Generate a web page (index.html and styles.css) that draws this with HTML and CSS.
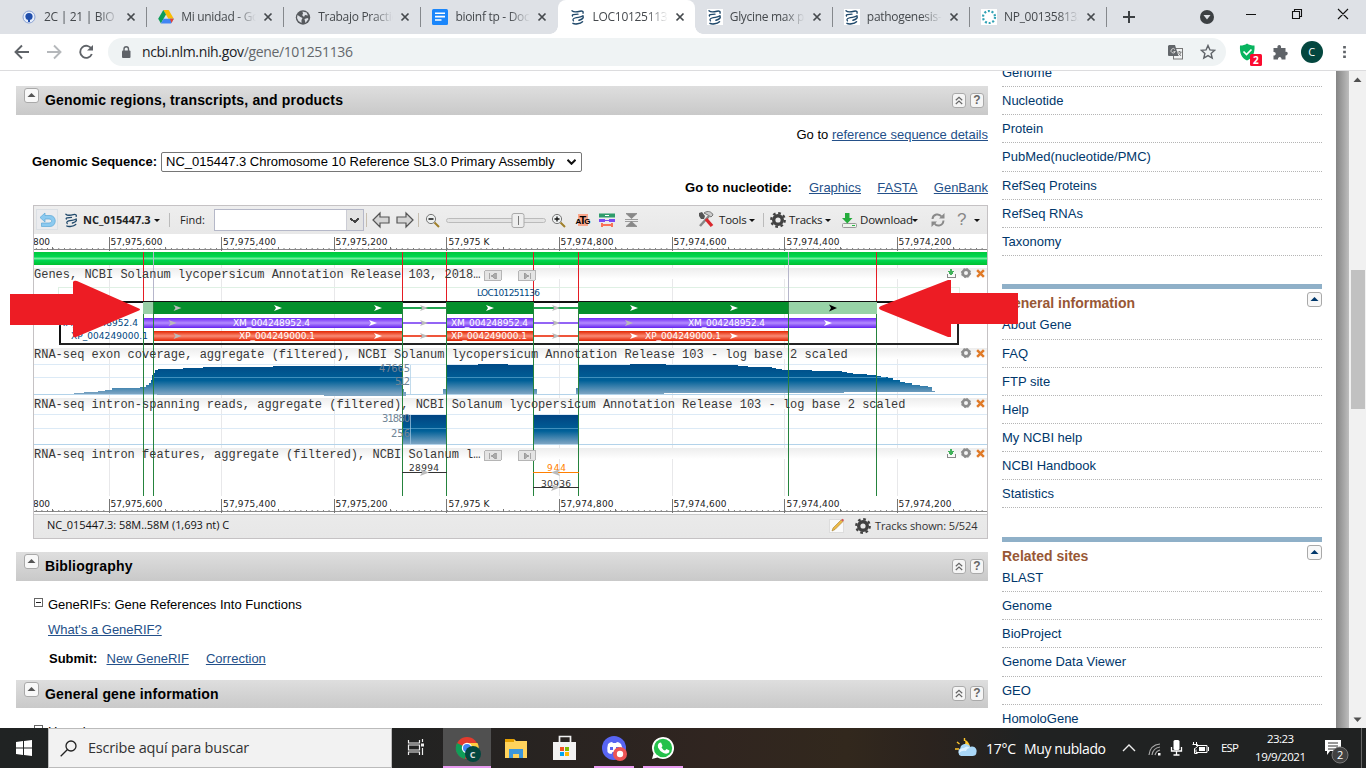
FILE: index.html
```html
<!DOCTYPE html>
<html lang="es">
<head>
<meta charset="utf-8">
<title>LOC101251136 - Gene - NCBI</title>
<link rel="stylesheet" href="styles.css">
</head>
<body>
<svg class="defs" width="0" height="0">
  <symbol id="dna" viewBox="0 0 16 16"><g fill="none" stroke="#20496b" stroke-linecap="round"><path d="M2 1.800C4 3.800 7 3 10 2.200c2.500-.5 3.600.3 3 2" stroke-width="1.400"/><path d="M2.500 7C1.500 5.800 4 5.200 8 5.200M13 6.800C11 8.700 8 8 5 9c-2.500.8-2.300 2-1.500 2.900" stroke-width="1.300"/><path d="M9 11.200c3-.9 4.800-2 4-3.700M3 14.400c2 1.100 7 .5 9.500-1.700" stroke-width="1.500"/></g></symbol>
  <symbol id="x" viewBox="0 0 10 10"><path d="M1.500 1.500l7 7m0-7l-7 7" stroke="#45494d" stroke-width="1.700"/></symbol>
  <symbol id="gear" viewBox="0 0 16 16"><circle cx="8" cy="8" r="4.300" fill="none" stroke="currentColor" stroke-width="3.400"/><circle cx="8" cy="8" r="6.800" fill="none" stroke="currentColor" stroke-width="2.200" stroke-dasharray="2.670 2.670"/></symbol>
  <symbol id="up" viewBox="0 0 15 15"><rect x=".5" y=".5" width="14" height="14" rx="2.500" fill="#f8f8f8" stroke="#a9a9a9"/><path d="M3.500 9h8l-4-4z" fill="currentColor"/></symbol>
  <symbol id="dbl" viewBox="0 0 14 15"><rect x=".5" y=".5" width="13" height="14" rx="2.500" fill="#f5f5f5" stroke="#aaa"/><path d="M3.800 7.200L7 4.300l3.200 2.900M3.800 11L7 8.100l3.200 2.900" fill="none" stroke="#666" stroke-width="1.200"/></symbol>
  <symbol id="trackx" viewBox="0 0 8 8"><path d="M1 1l6 6m0-6L1 7" stroke="#e07a28" stroke-width="2.200"/></symbol>
</svg>

<header class="tabs">
  <div class="tab"><svg width="14" height="14" viewBox="0 0 14 14"><circle cx="7" cy="7" r="6" fill="#e7eefb" stroke="#8ba3d4"/><circle cx="7" cy="6.500" r="3.600" fill="#204eab"/><path d="M6 9h2v3H6z" fill="#204eab"/></svg><span>2C | 21 | BIO |B</span><svg class="cl"><use href="#x"/></svg></div>
  <div class="tab"><svg width="16" height="14" viewBox="0 0 16 14"><path d="M5.300 0h5.400l5.100 8.800h-5.400z" fill="#fbbc04"/><path d="M5.300 0L8 4.600 2.900 13.500.2 8.800z" fill="#0f9d58"/><path d="M5.600 8.800h10.200l-2.700 4.700H2.900z" fill="#4285f4"/><path d="M11.900 8.800h3.900l-2.300 4.200z" fill="#ea4335"/></svg><span>Mi unidad - Google</span><svg class="cl"><use href="#x"/></svg></div>
  <div class="tab"><svg width="15" height="15" viewBox="0 0 15 15"><circle cx="7.500" cy="7.500" r="7.200" fill="#56595d"/><path d="M2 5l3 2 2 1-1 2 0 3-3-2-1.500-3zM7 1.500l4 1 1.500 3-3-.5-1 2-2-2 1-1zM9 9l3-1 1 1-3 4z" fill="#dee1e6"/></svg><span>Trabajo Practico</span><svg class="cl"><use href="#x"/></svg></div>
  <div class="tab nosep"><svg width="16" height="16" viewBox="0 0 16 16"><rect width="16" height="16" rx="1.500" fill="#1a86fb"/><path d="M3 4.200h10M3 7.600h10M3 11h6.500" stroke="#fff" stroke-width="1.600"/></svg><span>bioinf tp - Docum</span><svg class="cl"><use href="#x"/></svg></div>
  <div class="tab active"><svg width="16" height="16"><use href="#dna"/></svg><span>LOC10125113</span><svg class="cl"><use href="#x"/></svg></div>
  <div class="tab nosep"><svg class="wb" width="16" height="16"><use href="#dna"/></svg><span>Glycine max pat</span><svg class="cl"><use href="#x"/></svg></div>
  <div class="tab lsep"><svg class="wb" width="16" height="16"><use href="#dna"/></svg><span>pathogenesis-r</span><svg class="cl"><use href="#x"/></svg></div>
  <div class="tab"><svg class="wb" width="16" height="16" viewBox="0 0 16 16"><circle cx="8" cy="8" r="6" fill="none" stroke="#31a2b5" stroke-width="2.200" stroke-dasharray="2 1.770"/></svg><span>NP_0013581334</span><svg class="cl"><use href="#x"/></svg></div>
  <svg class="winctl" width="260" height="34" viewBox="1106 0 260 34"><path d="M1123 17h12M1129 11v12" stroke="#3c4043" stroke-width="2"/><circle cx="1207" cy="17" r="7" fill="#3c4043"/><path d="M1203.500 15h7l-3.500 4.500z" fill="#dee1e6"/><path d="M1246 14.500h10M1292.500 11.500h7v7h-7zM1294.500 11v-1.500h7v7h-2M1338 9l10 10m0-10l-10 10" fill="none" stroke="#111" stroke-width="1.100"/></svg>
</header>

<div class="nav">
  <svg width="108" height="36" viewBox="0 34 108 36" fill="none" stroke="#5f6368" stroke-width="1.900"><path d="M29 52H16m6-6.500L15.500 52l6.500 6.500"/><path d="M47 52h13m-6-6.500l6.500 6.500-6.500 6.500" stroke="#b5b8bb"/><path d="M91.500 49a6 6 0 1 0 .3 5"/><path d="M87 50.500h6V45z" fill="#5f6368" stroke="none"/></svg>
  <div class="omni"><svg width="10" height="12" viewBox="0 0 10 12"><rect x="1" y="4.500" width="8.500" height="7.500" rx="1" fill="#5f6368"/><path d="M3 5V3a2.250 2.250 0 0 1 4.500 0v2" fill="none" stroke="#5f6368" stroke-width="1.400"/></svg><span class="url">ncbi.nlm.nih.gov<i>/gene/101251136</i></span>
    <svg width="15" height="15" viewBox="0 0 15 15"><rect x="5.500" y="3.500" width="9" height="10.500" fill="#f1f3f4" stroke="#777"/><path d="M1 0h6l3.500 11H1a1 1 0 0 1-1-1V1z" fill="#62666a"/><path d="M7 4.500a2.200 2.200 0 1 0 .3 2H5.500" fill="none" stroke="#ddd" stroke-width=".9"/><path d="M9.500 7h4M11.500 6v1m1.500 0c-.5 2-1.500 3-2.500 3.500m0-2.500l2.500 3" fill="none" stroke="#666" stroke-width=".8"/></svg>
    <svg class="star" width="16" height="16" viewBox="0 0 16 16"><path d="M8 1.500l1.900 4.400 4.800.4-3.600 3.100 1.100 4.700L8 11.600l-4.200 2.500 1.100-4.700L1.300 6.300l4.800-.4z" fill="none" stroke="#5f6368" stroke-width="1.400"/></svg></div>
  <svg width="140" height="36" viewBox="1226 34 140 36"><path d="M1240 45.500c3 0 5-.5 7-2 2 1.500 4.500 2 7.500 2 .5 8-2 12.500-7.500 15-5.500-2.500-7.500-7-7-15z" fill="#08b45f"/><path d="M1243.500 51.500l3 3 5-5" stroke="#fff" stroke-width="1.700" fill="none"/><rect x="1250" y="54" width="12" height="12" rx="1.500" fill="#fb0b2f"/><text class="badge" x="1253" y="64">2</text><path d="M1273.500 48h4c-1-4 4.500-4 3.500 0h4.500v4c3-1 3 4 0 3.500v4h-4c.5-3.500-4-3.500-3.500 0h-4.500v-4c3 .5 3-4 0-3.500z" fill="#5f6368"/><circle cx="1312" cy="52" r="11" fill="#04473f"/><text class="ava" x="1308.200" y="56">C</text><path d="M1344.500 46v2.500m0 2.250v2.500m0 2.250v2.500" stroke="#5f6368" stroke-width="2.700"/></svg>
</div>

<div class="page">
<main>
  <h2 class="bar"><svg class="u" width="15" height="15"><use href="#up"/></svg><span>Genomic regions, transcripts, and products</span><svg width="14" height="15"><use href="#dbl"/></svg><b class="q">?</b></h2>
  <div class="r ra"><span>Go to <a>reference sequence details</a></span></div>
  <div class="r rb"><b>Genomic Sequence:</b><div class="sel"><span>NC_015447.3 Chromosome 10 Reference SL3.0 Primary Assembly</span><svg width="9" height="6" viewBox="0 0 9 6"><path d="M.5 .8l4 4 4-4" fill="none" stroke="#111" stroke-width="2"/></svg></div></div>
  <div class="r rc"><b>Go to nucleotide:</b><a>Graphics</a><a>FASTA</a><a>GenBank</a></div>

  <section class="viewer">
    <div class="vt">
      <svg width="48" height="28" viewBox="34 206 48 28"><rect x="36.500" y="209.500" width="21" height="20" fill="#ebecef" stroke="#dbe0e5"/><path d="M45 213l-5 4.500 5 4.500v-3h4c3.500 0 3.500 4 0 4h-7.500v3.500h8.500c7 0 7-11 0-11h-5z" fill="#8ccaf0" stroke="#5ba8d6" stroke-width=".7"/><svg x="64" y="212" width="15" height="16"><use href="#dna"/></svg></svg>
      <b class="acc">NC_015447.3</b><i class="car"></i><i class="vs"></i><span class="find">Find:</span>
      <div class="inp"><svg width="17" height="20" viewBox="0 0 17 20"><rect width="17" height="20" fill="#e3e3e3"/><path d="M0 0v20" stroke="#b5b8c8"/><path d="M4 8h2v1h1v1h3V9h1V8h2v2h-1v1h-1v1h-1v1H8v-1H7v-1H5v-1H4z" fill="#444"/></svg></div>
      <svg width="334" height="28" viewBox="364 206 334 28"><path d="M366.500 213v14M418.500 213v14" stroke="#c6beb0"/><path d="M373 220l7-7v4h9v6h-9v4zM413 220l-7-7v4h-9v6h9v4z" fill="#d4d4d4" stroke="#555" stroke-width="1.200"/><g fill="#edf0f0" stroke="#777"><circle cx="431" cy="219" r="4.600"/><circle cx="557" cy="219" r="4.600"/></g><path d="M434.500 222.500l4.500 4.500M560.500 222.500l4.500 4.500" stroke="#a0802c" stroke-width="2"/><path d="M428.500 219h5M554.500 219h5m-2.500-2.500v5" stroke="#111" stroke-width="1.300"/><rect x="446.500" y="218.500" width="99" height="4" rx="2" fill="#e4e4e4" stroke="#bbb"/><rect x="512" y="213.500" width="12" height="14" rx="2" fill="#eee" stroke="#aaa"/><path d="M518.500 216v9" stroke="#777"/><rect x="578" y="214" width="10" height="12" fill="#f9a58b"/><text class="atg" x="575.500" y="224" textLength="15">A<tspan font-size="11">T</tspan>G</text><path d="M599 215.500h16" stroke="#2f9c6b" stroke-width="4"/><path d="M605 215.500h4" stroke="#fff" stroke-width="1"/><path d="M599 220.500h6m4 0h6" stroke="#7a4af2" stroke-width="3"/><path d="M605 220.500h4" stroke="#7a4af2"/><path d="M601 225h11M602 223v4m10-4v4" stroke="#fa7157" stroke-width="2"/><path d="M625 219.500h13M625 221.500h13M626 213.500h11l-5.500 5zM626 226.500h11l-5.500-5z" fill="#888" stroke="#888" stroke-width=".8"/></svg>
      <svg width="18" height="20" viewBox="698 210 18 20"><path d="M700 226l9-10" stroke="#888" stroke-width="2.500"/><path d="M704 213c4-3 8-1 9 2l-2 2-3-2z" fill="#ccc" stroke="#777"/><path d="M699 213l3-1 3 4-1 3-3 0-2-3z" fill="#555"/><path d="M706 219l6 7" stroke="#d9272c" stroke-width="3.400"/></svg>
      <span class="t1">Tools</span><i class="car"></i><i class="vs v2"></i>
      <svg class="gr" width="16" height="16"><use href="#gear"/></svg><span class="t2">Tracks</span><i class="car"></i>
      <svg class="dl" width="18" height="17" viewBox="0 0 18 17"><rect x="1.500" y="11.500" width="14" height="4" rx="1" fill="#eef3ec" stroke="#999"/><path d="M4 1h4.500v5h3L6.300 11.500 1 6h3z" fill="#25ac3c"/><path d="M11 13.500h3" stroke="#2eb649"/></svg><span class="t3">Download</span><i class="car"></i>
      <svg class="rf" width="16" height="16" viewBox="0 0 16 16"><path d="M2.500 7C3 2 9 1 11.500 4.500M13.500 8.500C13 14 7 15 4.500 11.500" fill="none" stroke="#8a8a8a" stroke-width="2"/><path d="M9 6.500h5.500V1zM7 9.500H1.500V15z" fill="#8a8a8a"/></svg>
      <span class="qm">?</span><i class="car"></i>
    </div>
    <svg class="chart" width="953" height="280" viewBox="34 234 953 280" shape-rendering="crispEdges">
      <defs>
        <linearGradient id="gg" x2="0" y2="1"><stop offset="0" stop-color="#00c83c"/><stop offset=".35" stop-color="#00d650"/><stop offset=".5" stop-color="#6df09b"/><stop offset=".65" stop-color="#00d650"/><stop offset="1" stop-color="#00c02f"/></linearGradient>
        <linearGradient id="pu" x2="0" y2="1"><stop offset="0" stop-color="#6d28f5"/><stop offset=".5" stop-color="#b48bff"/><stop offset="1" stop-color="#6422ef"/></linearGradient>
        <linearGradient id="rd" x2="0" y2="1"><stop offset="0" stop-color="#e22500"/><stop offset=".5" stop-color="#fa8a74"/><stop offset="1" stop-color="#e02200"/></linearGradient>
        <linearGradient id="hd" x2="0" y2="1"><stop offset="0" stop-color="#ededed"/><stop offset="1" stop-color="#fff"/></linearGradient>
        <linearGradient id="bl" gradientUnits="userSpaceOnUse" x1="0" x2="0" y1="364" y2="394"><stop offset="0" stop-color="#004a86"/><stop offset=".55" stop-color="#006098"/><stop offset="1" stop-color="#7ea5c3"/></linearGradient>
        <linearGradient id="b2" x2="0" y2="1"><stop offset="0" stop-color="#004482"/><stop offset=".55" stop-color="#006098"/><stop offset="1" stop-color="#7ea5c3"/></linearGradient>
        <pattern id="tk" x="109" width="5.630" height="2" patternUnits="userSpaceOnUse" y="0"><rect width="1.200" height="2" fill="#777"/></pattern>
        <g id="rule"><path d="M34 249.500h953" stroke="#888"/><rect x="34" y="247.500" width="953" height="1.500" fill="url(#tk)"/><path d="M109.500 237v14M221.500 237v14M334.500 237v14M446.500 237v14M559.500 237v14M672.500 237v14M784.500 237v14M897.500 237v14M52.500 247v3M165.500 247v3M278.500 247v3M390.500 247v3M503.500 247v3M615.500 247v3M728.500 247v3M840.500 247v3M953.500 247v3" stroke="#777"/>
        <g class="rl"><text x="33" y="245" textLength="17">800</text><text x="110.500" y="245" textLength="52">57,975,600</text><text x="223" y="245" textLength="53">57,975,400</text><text x="335.500" y="245" textLength="52">57,975,200</text><text x="448.500" y="245" textLength="41">57,975 K</text><text x="560.500" y="245" textLength="53">57,974,800</text><text x="673.500" y="245" textLength="53">57,974,600</text><text x="786.500" y="245" textLength="53">57,974,400</text><text x="898.500" y="245" textLength="53">57,974,200</text></g></g>
        <g id="pv"><rect x=".5" y=".5" width="17" height="10" rx="1.500" fill="#e4e4e4" stroke="#b5b5b5"/><path d="M5.500 3v6M12 3v6L7 6z" fill="#aaa" stroke="#999" stroke-width=".8"/></g>
        <g id="gearx" shape-rendering="auto"><circle cx="966" cy="5" r="3.300" fill="none" stroke="#8c8c8c" stroke-width="2.600"/><circle cx="966" cy="5" r="4.600" fill="none" stroke="#8c8c8c" stroke-dasharray="1.800 1.800"/><svg x="976" y="1" width="9" height="9"><use href="#trackx"/></svg></g>
        <g id="dn"><path d="M951 0v5m-2.500-3l2.500 3 2.500-3" stroke="#41b15a" stroke-width="1.800" fill="none"/><path d="M947 5v3h8V5" fill="none" stroke="#888"/></g>
      </defs>
      <rect x="34" y="234" width="953" height="280" fill="#fff"/>
      <use href="#rule"/><use href="#rule" y="262"/>
      <path d="M109.500 265v231M221.500 265v231M334.500 265v231M446.500 265v231M559.500 265v231M672.500 265v231M784.500 265v231M897.500 265v231" stroke="#e8e8ea"/>
      <rect x="34" y="252" width="953" height="13" fill="url(#gg)"/>
      <g fill="url(#hd)"><rect x="34" y="268" width="953" height="11"/><rect x="34" y="348" width="953" height="11"/><rect x="34" y="398" width="953" height="11"/><rect x="34" y="448" width="953" height="11"/></g>
      <path d="M58.500 301V287.500h901V301" fill="none" stroke="#dff0e4"/>
      <path d="M34 364.500h953M34 377.500h953M34 414.500h953M34 428.500h953" stroke="#dceaf6"/><path d="M34 394.500h953M34 444.500h953" stroke="#b3d3ea"/>
      <path d="M74 394v-1h10v-1h14v-1h7v-1h7v-2h28v-1h6v-2h3v-2h2v-3h1v-5h1v-2h2v-3l6-1h22v-1h20v-1h70v-1h129v23h2v3h2v4zM443 394v-5h3v-24h32v-1h30v1h25v24h4v5zM576 394v-6h2v-23h52v-1h36v1h72v1h10v1h24v1h4v1h6v1h30v1h30v1h5v1h6v1h14v1h9v1h5v1h7v1h5v2h7v2h5v1h7v2h8v1h8v1h4v4h3v1z" fill="url(#bl)"/>
      <path d="M153 377.500h249M446 377.500h87M578 377.500h308" stroke="#4190bd"/>
      <rect x="402" y="415" width="45" height="29" fill="url(#b2)"/><rect x="533" y="415" width="46" height="29" fill="url(#b2)"/><path d="M402 428.500h45M533 428.500h46" stroke="#4190bd"/>
      <path d="M410.500 365v29M410.500 415v29" stroke="#a9cce5" opacity=".7"/>
      <path d="M59 301.500h900M59.500 301v43" stroke="#111" stroke-width="2"/><path d="M59 344h899V302" fill="none" stroke="#222" stroke-width="2"/>
      <rect x="143" y="302" width="10" height="12" fill="#98cfa6"/><rect x="788" y="302" width="89" height="12" fill="#98d3a7"/><path d="M153 302h250v12H153zM446 302h88v12h-88zM578 302h211v12H578z" fill="#058f2c"/>
      <path d="M403 308h43M534 308h44" stroke="#22a450" stroke-width="2"/><path d="M403 323h43M534 323h44" stroke="#9364f5" stroke-width="2"/><path d="M403 336h43M534 336h44" stroke="#ef553b" stroke-width="2"/>
      <g fill="url(#pu)"><rect x="143" y="318" width="260" height="10"/><rect x="446" y="318" width="88" height="10"/><rect x="578" y="318" width="299" height="10"/></g>
      <g fill="url(#rd)"><rect x="153" y="331" width="250" height="10"/><rect x="446" y="331" width="88" height="10"/><rect x="578" y="331" width="211" height="10"/></g>
      <path d="M143.500 252v49M402.500 252v49M446.500 252v49M533.500 252v49M578.500 252v49M876.500 252v49" stroke="#e51c23"/><path d="M153.500 252v49M788.500 252v49" stroke="#b6b6cb"/>
      <path d="M143.500 314v182M153.500 302v194M402.500 302v194M446.500 302v194M533.500 302v194M578.500 302v194M788.500 302v194M876.500 314v182" stroke="#25833d"/>
      <g class="mono"><text x="34" y="278">Genes, NCBI Solanum lycopersicum Annotation Release 103, 2018…</text><text x="34" y="358">RNA-seq exon coverage, aggregate (filtered), NCBI Solanum lycopersicum Annotation Release 103 - log base 2 scaled</text><text x="34" y="408">RNA-seq intron-spanning reads, aggregate (filtered), NCBI Solanum lycopersicum Annotation Release 103 - log base 2 scaled</text><text x="34" y="458">RNA-seq intron features, aggregate (filtered), NCBI Solanum l…</text></g>
      <use href="#pv" x="484" y="270"/><use href="#pv" x="484" y="450"/><use href="#pv" transform="translate(536 270) scale(-1 1)"/><use href="#pv" transform="translate(536 450) scale(-1 1)"/>
      <use href="#gearx" y="268"/><use href="#gearx" y="348"/><use href="#gearx" y="398"/><use href="#gearx" y="448"/><use href="#dn" y="269"/><use href="#dn" y="449"/>
      <g class="gl"><text class="nb" x="477" y="296" textLength="63">LOC101251136</text><text class="nb" x="59" y="326" textLength="79">XM_004248952.4</text><text class="nb" x="71" y="339" textLength="77">XP_004249000.1</text>
      <g fill="#fff"><text x="233" y="326" textLength="77">XM_004248952.4</text><text x="239" y="339" textLength="76">XP_004249000.1</text><text x="451" y="326" textLength="77">XM_004248952.4</text><text x="451" y="339" textLength="76">XP_004249000.1</text><text x="688" y="326" textLength="77">XM_004248952.4</text><text x="645" y="339" textLength="76">XP_004249000.1</text></g>
      <g class="gy"><text x="379" y="372" textLength="31">47665</text><text x="395" y="385" textLength="15">512</text><text x="382" y="422" textLength="28">31880</text><text x="391" y="437" textLength="19">256</text></g>
      <text x="409" y="471" textLength="30" fill="#333">28994</text><text x="547" y="471" textLength="19" fill="#ff7f00">944</text><text x="541" y="487" textLength="30" fill="#333">30936</text></g>
      <path d="M402 472.500h45M533 487.500h46" stroke="#333"/><path d="M533 472.500h46" stroke="#ff7f00"/>
      <g shape-rendering="auto"><g fill="#bbb"><path d="M173.500 305l8 3-8 3 2-3zM168.500 320l8 3-8 3 2-3zM173.500 333l8 3-8 3 2-3zM420 305l8 3-8 3 2-3zM420 320l8 3-8 3 2-3zM420 333l8 3-8 3 2-3zM552 305l8 3-8 3 2-3zM552 320l8 3-8 3 2-3zM552 333l8 3-8 3 2-3zM420 469l9 3.500-9 3.500 2-3.500zM551 484l9 3.500-9 3.500 2-3.500zM560 469l-9 3.500 9 3.500-2-3.500zM625 320l8 3-8 3 2-3z"/></g><g fill="#fff"><path d="M274 305l8 3-8 3 2-3zM374 305l8 3-8 3 2-3zM369 320l8 3-8 3 2-3zM374 333l8 3-8 3 2-3zM486 305l8 3-8 3 2-3zM630 305l8 3-8 3 2-3zM630 333l8 3-8 3 2-3zM730 305l8 3-8 3 2-3zM730 333l8 3-8 3 2-3zM824 320l8 3-8 3 2-3z"/></g><path d="M829 304.500l8 3.500-8 3.500 2-3.500z" fill="#000"/></g>
    </svg>
    <div class="vf"><span>NC_015447.3: 58M..58M (1,693 nt) C</span><svg class="pen" width="16" height="16" viewBox="0 0 16 16"><rect x=".5" y="1.500" width="14" height="13" fill="#fafafa" stroke="#ddd"/><path d="M3 13l1-3 8-8 2 1.500-8 8z" fill="#edba46" stroke="#a38238" stroke-width=".6"/><path d="M12 2l2 1.500 1-1.500-1.500-1.300z" fill="#d65353"/></svg><svg class="gr" width="16" height="16"><use href="#gear"/></svg><span class="ts">Tracks shown: 5/524</span></div>
  </section>

  <h2 class="bar b2"><svg class="u" width="15" height="15"><use href="#up"/></svg><span>Bibliography</span><svg width="14" height="15"><use href="#dbl"/></svg><b class="q">?</b></h2>
  <div class="rif"><i class="mn"></i><span>GeneRIFs: Gene References Into Functions</span></div>
  <div class="rif w"><a>What's a GeneRIF?</a></div>
  <div class="rif s"><b>Submit:</b><a>New GeneRIF</a><a>Correction</a></div>
  <h2 class="bar b3"><svg class="u" width="15" height="15"><use href="#up"/></svg><span>General gene information</span><svg width="14" height="15"><use href="#dbl"/></svg><b class="q">?</b></h2>
  <div class="rif m"><i class="mn"></i><span>Homology</span></div>
</main>
<aside>
  <ul class="first"><li>Genome<li>Nucleotide<li>Protein<li>PubMed(nucleotide/PMC)<li>RefSeq Proteins<li>RefSeq RNAs<li>Taxonomy</ul>
  <h3>General information<svg width="15" height="15"><use href="#up"/></svg></h3>
  <ul><li>About Gene<li>FAQ<li>FTP site<li>Help<li>My NCBI help<li>NCBI Handbook<li>Statistics</ul>
  <h3>Related sites<svg width="15" height="15"><use href="#up"/></svg></h3>
  <ul><li>BLAST<li>Genome<li>BioProject<li>Genome Data Viewer<li>GEO<li>HomoloGene</ul>
</aside>
<div class="edge"></div>
<div class="scroll"><svg width="17" height="17" viewBox="0 0 17 17"><path d="M4.500 11h8l-4-4.500z" fill="#505050"/></svg><div class="thumb"></div><svg width="17" height="17" viewBox="0 0 17 17"><path d="M4.500 6.500h8l-4 4.500z" fill="#505050"/></svg></div>
<svg class="arrows" width="1010" height="60" viewBox="9 279 1010 60"><path d="M10 294h63v-12q1-2 4-1l62 27.500q2 1 0 2L76 337q-3 1-3-2v-10H10z" fill="#ed1c24"/><path d="M1018 293h-67v-13h-3l-67 26q-4 2 0 4l67 27h3v-13h67z" fill="#ed1c24"/></svg>
</div>

<footer class="task">
  <div class="start"><svg width="16" height="16" viewBox="0 0 16 16"><path d="M0 2l7-1v6.500H0zM8 .9L16 0v7.500H8zM0 8.500h7V15l-7-1zM8 8.500h8V16l-8-1z" fill="#fff"/></svg></div>
  <div class="srch"><svg width="17" height="17" viewBox="0 0 17 17"><circle cx="11" cy="6" r="5" fill="none" stroke="#222" stroke-width="1.300"/><path d="M7.500 9.500L.7 16.300" stroke="#222" stroke-width="1.300"/></svg><span>Escribe aquí para buscar</span></div>
  <svg width="300" height="40" viewBox="392 728 300 40"><g fill="none" stroke="#eee" stroke-width="1.200"><path d="M408.500 740v3h11v-3M408.500 755v-3h11v3M408.500 745h11v5h-11zM422.500 739v3m0 6v7"/></g><path d="M421 743.500h3v3h-3z" fill="#eee"/>
    <rect x="443" y="728" width="48" height="40" fill="#505050"/><path d="M443 766h48v2h-48zM594 766h40v2h-40zM643 766h40v2h-40z" fill="#e89af0"/>
    <circle cx="467" cy="748" r="11" fill="#e33b2e"/><path d="M467 748l-10-5a11 11 0 0 0 8 16z" fill="#109d58"/><path d="M467 743h10.500a11 11 0 0 1-9 16z" fill="#ffcd40"/><circle cx="467" cy="748" r="5.200" fill="#fff"/><circle cx="467" cy="748" r="4" fill="#4285f4"/><circle cx="473" cy="754" r="8" fill="#04473f"/><text class="tc" x="469.800" y="757.500">C</text>
    <path d="M505 739h9l2 2h11v17h-22z" fill="#ffd35c"/><path d="M505 739h9v3h-9z" fill="#e5a000"/><path d="M509 758v-9h14v9h-4v-4h-6v4z" fill="#3c97dc"/>
    <path d="M559.500 743v-6.500h11v6.500" fill="none" stroke="#f1f1f1" stroke-width="1.700"/><path d="M553 742h23v18h-23z" fill="#f2f2f2"/><path d="M560 747h4v4h-4z" fill="#f25022"/><path d="M565 747h4v4h-4z" fill="#7fba00"/><path d="M560 752h4v4h-4z" fill="#00a4ef"/><path d="M565 752h4v4h-4z" fill="#ffb900"/>
    <circle cx="614" cy="748" r="12" fill="#5865f2"/><path d="M608 744q2-2 4-2l1 1h3l1-1q2 0 4 2 2 4 1.500 8-2 2-4 2l-1-2h-5l-1 2q-3 0-4-2-.5-5 .5-8z" fill="#fff"/><path d="M610 747h3v3h-3zM616 747h3v3h-3z" fill="#5865f2"/><circle cx="620" cy="754" r="7" fill="#ed5555"/><circle cx="620" cy="754" r="3.200" fill="#fff"/>
    <path d="M652 759l1.500-5.500a11 11 0 1 1 4 4z" fill="#fff"/><circle cx="663" cy="748" r="9.200" fill="#25c14b"/><path d="M659 743l2-.5 1.500 3.500-1 1.500q1.500 2.500 3.500 3l1.500-1.500 3 1.500-.5 2q-2 2-5.500.5-4-2-5.500-5.500-.8-3 1-4.500z" fill="#fff"/></svg>
  <svg class="tray" width="411" height="40" viewBox="955 728 411 40"><path d="M960 748a6 6 0 0 0 5-8c3 1 5 4 5 8z" fill="#ffc72c"/><path d="M957 742l2.500 2M964.500 738v3m-9.500 8h4" stroke="#ffc72c" stroke-width="1.400"/><path d="M961 756a4.500 4.500 0 0 1-.5-8c0-4 7-6 10-1 4-2 7 3 6 5 0 3-2 4-4 4z" fill="#a9d7f7"/><path d="M959 753q0-5 5-5 3-3 6 0-3 0-4 3-4-1-7 2z" fill="#dff2ff"/>
    <g class="tt"><text x="986" y="754" textLength="30">17°C</text><text x="1024" y="754" textLength="82">Muy nublado</text><text class="sm" x="1221" y="752" textLength="18">ESP</text><text class="sm" x="1267" y="743" textLength="27">23:23</text><text class="sm" x="1255" y="761" textLength="51">19/9/2021</text></g>
    <path d="M1123 751l6-6 6 6" fill="none" stroke="#eee" stroke-width="1.400"/><g fill="none" stroke="#aaa" stroke-width="1.200"><path d="M1149 755q1-10 11-11M1152 755q1-7 8-8M1155 755q1-4 5-5" /></g><path d="M1158 753h2.500v2.500h-2.500z" fill="#fff"/><rect x="1173.500" y="740" width="6" height="10" rx="1.500" fill="#fff"/><path d="M1171.500 747v4h10v-4M1176.500 751v4m-3 0h6" fill="none" stroke="#fff" stroke-width="1.300"/><path d="M1196 745.500h11v7h-11v-3M1208.500 747v4M1193.500 742v2m3-2v2m-4 .5h5v2q-2 2-3 2v5h3" fill="none" stroke="#fff"/><path d="M1199 747h6v4h-6z" fill="#fff"/>
    <path d="M1325 740h16v11h-11l-3 4v-4h-2z" fill="#fff"/><path d="M1328 743h10M1328 746h10M1328 749h7" stroke="#333"/><circle cx="1340" cy="755" r="8" fill="#414141" stroke="#777"/><text class="nt" x="1337" y="759">2</text><path d="M1361.500 728v40" stroke="#666"/></svg>
</footer>
</body>
</html>
```

FILE: styles.css
```css
*{box-sizing:border-box}
body{margin:0;width:1366px;height:768px;overflow:hidden;background:#fff;font:13px/16px "Liberation Sans",Arial,sans-serif;color:#000}
svg{display:block;flex:none}
i{font-style:normal}
.defs{position:absolute}
.tabs{height:34px;background:#dee1e6;display:flex;padding-left:9px;font:12px/16px "Open Sans","Noto Sans",sans-serif;color:#45494d}
.tab{width:137.150px;display:flex;align-items:center;padding:0 6px 0 12px;position:relative;flex:none}
.tab>svg:first-child{width:16px;margin-right:7px}
.tab span{width:75px;overflow:hidden;white-space:nowrap;letter-spacing:-.3px;-webkit-mask-image:linear-gradient(90deg,#000 72%,transparent);mask-image:linear-gradient(90deg,#000 72%,transparent)}
.tab .cl{width:10px;height:10px;margin-left:7px}
.tab:not(.active):not(.nosep)::after{content:"";position:absolute;right:-1px;top:7px;width:1px;height:20px;background:#85888c}
.tab.lsep::before{content:"";position:absolute;left:0;top:7px;width:1px;height:20px;background:#85888c}
.tab.active{background:#fff;border-radius:8px 8px 0 0}
.tab.active::before,.tab.active::after{content:"";position:absolute;bottom:0;width:8px;height:8px}
.tab.active::before{left:-8px;background:radial-gradient(circle at 0 0,#dee1e6 7.500px,#fff 8px)}
.tab.active::after{right:-8px;background:radial-gradient(circle at 100% 0,#dee1e6 7.500px,#fff 8px)}
.wb{background:#fff}
.nav{height:37px;display:flex;border-bottom:1px solid #dcdcde}
.omni{width:1118px;height:28px;margin-top:4px;border-radius:14px;background:#eff3f4;display:flex;align-items:center;padding:0 10px 0 13px}
.url{flex:1;margin-left:11px;font:14px/20px "Open Sans","Noto Sans",sans-serif;letter-spacing:-.35px;color:#202124}
.url i{color:#63676b}
.star{margin-left:17px}
.badge{font:bold 10px "Noto Sans",sans-serif;fill:#fff}
.ava{font:11px "Open Sans",sans-serif;fill:#fff}
.page{height:657px;display:flex;position:relative;overflow:hidden}
main{width:972px;margin-left:16px;flex:none}
.bar{height:29px;margin:15px 0 0;background:linear-gradient(#dedede,#c9c9c9);display:flex;align-items:center;font-size:14px;line-height:29px;padding:0 4px 0 8px}
.bar .u{align-self:flex-start;margin:2px 6px 0 0;color:#555}
.bar span{flex:1;letter-spacing:.17px}
.bar>svg:not(.u),.bar .q{margin-top:-1px}
.q{width:14px;height:15px;border:1px solid #aaa;border-radius:3px;background:#f5f5f5;color:#666;font:bold 12px/13px "Liberation Sans",sans-serif;text-align:center;margin-left:4px}
a{color:#245089;text-decoration:underline}
.r{display:flex;align-items:center;white-space:nowrap}
.ra{height:26px;margin-top:7px;justify-content:flex-end}
.rb{height:27px;padding-left:16px}
.rb b{width:129px}
.sel{width:421px;height:20px;border:1px solid #767676;border-radius:2px;display:flex;align-items:center;justify-content:space-between;padding:0 5px 0 4px}
.rc{height:26px;justify-content:flex-end}
.rc a{margin-left:16.300px}
.rc b+a{margin-left:17px}
.viewer{height:334px;margin:4px 0 0 17px;width:955px;border:1px solid #c5c2c4;border-bottom-width:2px}
.vt,.vf{font:11px/16px "Open Sans","Noto Sans",sans-serif;color:#222}
.vt{height:28px;background:linear-gradient(#eee,#e8e8e8);display:flex;align-items:center;white-space:nowrap}
.acc{width:71px;margin-left:1px}
.car{border:3px solid transparent;border-top:3px solid #111;border-bottom:0;width:6px}
.vs{width:1px;height:14px;background:#bbb;margin-left:9px}
.find{width:34px;margin-left:10px}
.inp{width:150px;height:22px;border:1px solid #b5b8c8;background:#fff;display:flex;justify-content:flex-end}
.t1{width:30px;margin-left:3px}
.t2{width:36px}
.t3{width:52px}
.t1,.t2,.t3{font-size:11.500px;letter-spacing:-.2px}
.v2{margin-left:8px}
.gr{color:#414141}
.vt .gr{margin:0 3px 0 6px}
.dl{margin:0 1px 0 10px}
.rf{margin-left:12px}
.qm{font:17px/20px "Liberation Sans",sans-serif;color:#888;margin:0 7px 0 11px;width:10px}
.vf{height:24px;border-top:1px solid #c9c9c9;background:linear-gradient(#eaeaea,#e7e7e7);display:flex;align-items:center;padding-left:13px;color:#111;white-space:nowrap}
.vf>span:first-child{width:782px;letter-spacing:-.06px;margin-top:-3px}
.pen{margin-right:10px}
.pen,.vf .gr,.ts{margin-top:-1px}
.vf .ts{margin-left:4px;color:#333;letter-spacing:-.12px}
.mono{font:12px "Liberation Mono",monospace;fill:#383838}
.rl{font:9px "DejaVu Sans",sans-serif;fill:#222}
.gl{font:9px "DejaVu Sans",sans-serif}
.nb{fill:#00477f}
.gy{fill:#718596;font-size:10px}
.atg{font:bold 8px "Liberation Sans",sans-serif}
.b2{margin-top:13px}
.rif{display:flex;align-items:center;height:16px;margin:16px 0 0 18px}
.mn{width:9px;height:9px;border:1px solid #666;position:relative;margin:-6px 5px 0 0;flex:none}
.mn::after{content:"";display:block;height:1px;margin:3px 1px;background:#222}
.w{margin:9px 0 0 32px}
.s{margin:13px 0 0 33px}
.s b{width:57.500px}
.s a+a{margin-left:17px}
.b3{height:28px;line-height:26px;margin-top:13px}
.m{margin-top:16px}
aside{width:320px;margin-left:14px;flex:none}
aside ul{list-style:none;margin:0;padding:0}
aside .first{margin-top:-12px}
aside li{height:28.150px;line-height:27px;border-bottom:1px dotted #b5b5b5;color:#00376b}
aside h3{margin:28.500px 0 0;height:27px;border-top:5px solid #8fb0c8;color:#985735;font-size:14px;line-height:28px;display:flex;justify-content:space-between}
aside h3 svg{margin-top:3px;color:#00376b}
.edge{width:13px;margin-left:14px;background:linear-gradient(90deg,#848484,#bdbdbd)}
.scroll{width:17px;background:#f1f1f1;display:flex;flex-direction:column;justify-content:space-between}
.thumb{height:139px;background:#c1c1c1;margin:0 1px 120px 2px}
.arrows{position:absolute;left:9px;top:208px}
.task{height:40px;display:flex;background:linear-gradient(90deg,#202323 0,#202222 27%,#302520 52%,#32281d 62%,#2b231e 68%,#202222 75%,#202222)}
.start{width:48px;display:flex;align-items:center;justify-content:center}
.srch{width:344px;height:40px;background:#f2f2f2;border:1px solid #bbb;display:flex;align-items:center;padding-left:11px;font:14.500px/20px "Open Sans","Noto Sans",sans-serif;color:#333;letter-spacing:-.2px}
.srch span{margin-left:11px}
.tc{font:bold 9px "Open Sans",sans-serif;fill:#ddd}
.tray{margin-left:auto}
.tt{font:14px "Open Sans",sans-serif;fill:#fff}
.sm{font-size:11.500px}
.nt{font:11px "Open Sans",sans-serif;fill:#fff}
```
